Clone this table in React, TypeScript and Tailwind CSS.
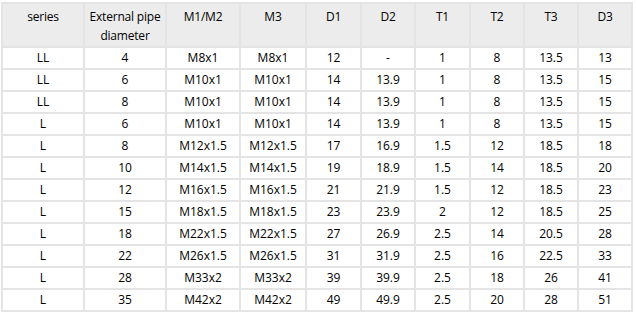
const cols = ['w-[80px]', 'w-[80px]', 'w-[72px]', 'w-[64px]', 'w-[53px]', 'w-[52px]', 'w-[53px]', 'w-[52px]', 'w-[52px]', 'w-[52px]'];

const rows: string[][] = [
  ['LL', '4', 'M8x1', 'M8x1', '12', '-', '1', '8', '13.5', '13'],
  ['LL', '6', 'M10x1', 'M10x1', '14', '13.9', '1', '8', '13.5', '15'],
  ['LL', '8', 'M10x1', 'M10x1', '14', '13.9', '1', '8', '13.5', '15'],
  ['L', '6', 'M10x1', 'M10x1', '14', '13.9', '1', '8', '13.5', '15'],
  ['L', '8', 'M12x1.5', 'M12x1.5', '17', '16.9', '1.5', '12', '18.5', '18'],
  ['L', '10', 'M14x1.5', 'M14x1.5', '19', '18.9', '1.5', '14', '18.5', '20'],
  ['L', '12', 'M16x1.5', 'M16x1.5', '21', '21.9', '1.5', '12', '18.5', '23'],
  ['L', '15', 'M18x1.5', 'M18x1.5', '23', '23.9', '2', '12', '18.5', '25'],
  ['L', '18', 'M22x1.5', 'M22x1.5', '27', '26.9', '2.5', '14', '20.5', '28'],
  ['L', '22', 'M26x1.5', 'M26x1.5', '31', '31.9', '2.5', '16', '22.5', '33'],
  ['L', '28', 'M33x2', 'M33x2', '39', '39.9', '2.5', '18', '26', '41'],
  ['L', '35', 'M42x2', 'M42x2', '49', '49.9', '2.5', '20', '28', '51'],
];

const head = ['series', 'External pipe diameter', 'M1/M2', 'M3', 'D1', 'D2', 'T1', 'T2', 'T3', 'D3'];

export default function App() {
  return (
    <div className="w-[637px] h-[317px] bg-white pt-[2px] pl-px font-['Open_Sans',sans-serif] text-[12px] text-black">
      <div className="inline-flex flex-col gap-[2px] p-[2px] bg-[#e4e4e4]">
        {/* header */}
        <div className="flex gap-[2px]">
          {head.map((h, i) => (
            <div key={i} className={`${cols[i]} h-[42px] bg-[#ececec] text-center leading-[19px] pt-[3px] tracking-[-0.2px]`}>
              {h}
            </div>
          ))}
        </div>
        {rows.map((r, ri) => (
          <div key={ri} className="flex gap-[2px]">
            {r.map((c, ci) => (
              <div key={ci} className={`${cols[ci]} h-[20px] bg-white flex items-center justify-center`}>
                {c}
              </div>
            ))}
          </div>
        ))}
      </div>
    </div>
  );
}
